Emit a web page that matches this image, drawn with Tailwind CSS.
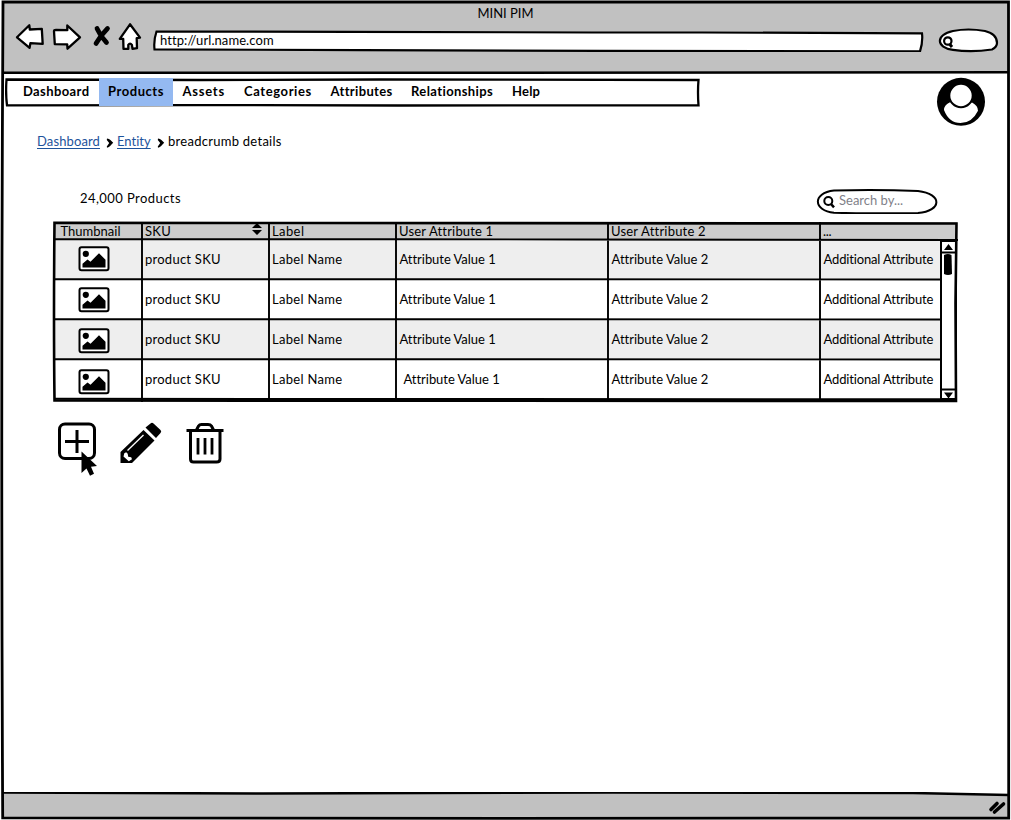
<!DOCTYPE html>
<html lang="en"><head><meta charset="utf-8"><title>MINI PIM</title>
<script src="https://cdn.jsdelivr.net/npm/@tailwindcss/browser@4"></script></head>
<body class="bg-white">
<svg class="hidden">
<symbol id="pic" viewBox="0 0 32 26"><rect x="1.500" y="1.200" width="29" height="23" rx="2" fill="#fff" stroke="#000" stroke-width="2"/><circle cx="7.800" cy="7.800" r="3.100"/><path d="M4.500 21.500v-3.800l5-4.200 3 2.200 8.500-8.500 6.500 6.500v7.800z"/></symbol>
<symbol id="chev" viewBox="0 0 8 10"><path d="M1 .5C4 1 5 2.500 7.200 4.800 5 7 4 9 1 9.700L.8 8.500 3.200 5 .8 2z"/></symbol>
</svg>
<div class="relative flex h-[820px] w-[1011px] flex-col overflow-hidden font-['Lato','Liberation_Sans',sans-serif] text-[13px] leading-4 text-black [font-variant-ligatures:none]">
<header class="flex h-[73px] shrink-0 flex-col bg-[#c1c1c1]">
<div class="flex h-[22px] items-center justify-center pt-[3px]"><span>MINI PIM</span></div>
<div class="flex h-[40px] items-start">
<svg class="h-[40px] w-[152px] shrink-0" viewBox="0 22 152 40" fill="#fff" stroke="#000" stroke-width="2.300" stroke-linejoin="round">
<path d="M17 37.300 29.300 25.300l.5 4.200 12-.6.9 15-12.300-.8-.8 4.700z"/><path d="M54 31.300q0-1.300 2-1.300l11.300.2V25.500L80 37.300 67.500 48.700l-.3-4.400-12.400-.1z"/>
<path d="M97 28.500q3.500 8 9.500 14M107.500 28.500q-7 7-11.500 15" stroke-width="4.700" stroke-linecap="round"/>
<path d="m130 24.300 10 13.300-3.300.6.300 10-4.500.7-.6-4q-1.900-2.600-3.600 0v4h-4.800l-.3-10h-3.400z"/></svg>
<div class="relative h-[22px] w-[772px] shrink-0 pt-[10px] pl-[8px]"><svg class="absolute top-[8px] left-0" width="772" height="22" viewBox="152 30 772 22"><path d="M156.500 31.500 350 31.800 592 32.500h110l220 .8q1 9-2 18L600 50.800 360 50.200l-205.500-.9q-1-9 2-17.800z" fill="#fff" stroke="#000" stroke-width="2.200"/></svg><span class="relative tracking-[.08px]">http://url.name.com</span></div>
<svg class="mt-[5px] ml-[13px] h-[28px] w-[64px] shrink-0" viewBox="937 27 64 28" fill="#fff" stroke="#000" stroke-width="2.200"><path d="M953 31q15-3 32 0 12 3 12 12 0 4-5 6.500-21 3-39 .3c-17-2-18-15 0-18.800z"/><circle cx="947.800" cy="41" r="3.700"/><path d="m949.500 44 2.500 3" stroke-width="3"/></svg>
</div>
</header>

<div class="flex h-[55px] shrink-0 pl-[5px]">
<div class="relative mt-[5px] h-[29px] w-[695px]">
<svg class="absolute inset-0" width="695" height="29" viewBox="5 78 695 29" fill="none" stroke="#000"><path d="M6.500 79.500 200 80l180-.5 318.500.5q-1 12 0 25.300l-300.500.2-200-.4-191 .3q-1.500-12-.5-25.900z" stroke-width="2.300"/></svg>
<nav class="relative flex h-[28px] pl-[9px] font-bold leading-[27px] whitespace-nowrap"><a class="w-[85px] pl-[9px] tracking-[0.4px]">Dashboard</a><a class="w-[74px] bg-[#94b9f1] pl-[9px] tracking-[0.55px]">Products</a><a class="w-[62px] pl-[9.500px] tracking-[0.75px]">Assets</a><a class="w-[87px] pl-[9px] tracking-[0.6px]">Categories</a><a class="w-[80px] pl-[8.500px] tracking-[0.35px]">Attributes</a><a class="w-[101px] pl-[9px] tracking-[0.4px]">Relationships</a><a class="pl-[9px] tracking-[0.2px]">Help</a></nav></div>
<svg class="mt-[4px] ml-[236px]" width="50" height="50" viewBox="936 77 50 50"><circle cx="961" cy="101.800" r="24"/><path d="M944 110q0-5 5.500-7.500 2-.5 3.500.5a12 12 0 0 0 16 0q1.500-1 3.500-.3 5.500 3 5.500 8-6 12.300-17.500 12.300T944 110z" fill="#fff"/><circle cx="961" cy="95.500" r="11.700" fill="#fff" stroke="#000" stroke-width="2"/></svg>
</div>
<div class="flex h-[26px] shrink-0 items-center pl-[37px] whitespace-nowrap"><a class="w-[63px] text-[#1d539b] underline underline-offset-2 tracking-[.12px]">Dashboard</a><svg class="ml-[6px] mr-[3px] mt-[3px] h-[10px] w-[8px]"><use href="#chev"/></svg><a class="w-[34px] text-[#1d539b] underline underline-offset-2">Entity</a><svg class="ml-[6px] mr-[3px] mt-[3px] h-[10px] w-[8px]"><use href="#chev"/></svg><span class="tracking-[.27px]">breadcrumb details</span></div>
<div class="mt-[34px] flex h-[34px] shrink-0"><span class="mt-[2px] ml-[80px] w-[736px] tracking-[.43px]">24,000 Products</span>
<div class="relative h-[26px] w-[122px]"><svg class="absolute inset-0" width="122" height="26" viewBox="816 188 122 26" fill="#fff" stroke="#000" stroke-width="2"><path d="M834 190.500q45-1 84 .5c25 3 24 20 0 22q-45 .8-84-.2c-21-2-22-20 0-22.300z"/><circle cx="828.300" cy="201" r="4"/><path d="m831 204 3 3.300" stroke-width="2.500"/></svg><span class="relative ml-[23px] block pt-[4px] text-[#818189]">Search by...</span></div></div>

<div class="relative ml-[54px] h-[181px] w-[904px] shrink-0">
<div class="grid grid-cols-[88px_127px_127px_212px_212px_137px] whitespace-nowrap">
<div class="col-span-6 grid h-[18px] grid-cols-subgrid bg-[#ccc] leading-[19px]"><span class="pl-[6.500px]">Thumbnail</span><span class="flex justify-between pr-[7px] pl-[3px] tracking-[.3px]">SKU<svg width="10" height="12" viewBox="0 0 10 12" class="mt-[1px]"><path d="m5 0 5 5H0zM0 7h10L5 12z"/></svg></span><span class="pl-[3px] tracking-[.4px]">Label</span><span class="pl-[3px] tracking-[.17px]">User Attribute 1</span><span class="pl-[3px] tracking-[.2px]">User Attribute 2</span><span class="pl-[3px] tracking-[-.3px]">...</span></div>
<div class="col-span-6 grid h-10 grid-cols-subgrid bg-[#eee] leading-[39px]"><span class="pt-[6px] pl-[24px]"><svg class="h-[26px] w-[32px]"><use href="#pic"/></svg></span><span class="pl-[3px] tracking-[.25px]">product SKU</span><span class="pl-[3px] tracking-[.3px]">Label Name</span><span class="pl-[3.500px] tracking-[-.04px]">Attribute Value 1</span><span class="pl-[3.500px]">Attribute Value 2</span><span class="pl-[3.500px] tracking-[-.15px]">Additional Attribute</span></div>
<div class="col-span-6 grid h-10 grid-cols-subgrid leading-[39px]"><span class="pt-[7px] pl-[24px]"><svg class="h-[26px] w-[32px]"><use href="#pic"/></svg></span><span class="pl-[3px] tracking-[.25px]">product SKU</span><span class="pl-[3px] tracking-[.3px]">Label Name</span><span class="pl-[3.500px] tracking-[-.04px]">Attribute Value 1</span><span class="pl-[3.500px]">Attribute Value 2</span><span class="pl-[3.500px] tracking-[-.15px]">Additional Attribute</span></div>
<div class="col-span-6 grid h-10 grid-cols-subgrid bg-[#eee] leading-[39px]"><span class="pt-[8px] pl-[24px]"><svg class="h-[26px] w-[32px]"><use href="#pic"/></svg></span><span class="pl-[3px] tracking-[.25px]">product SKU</span><span class="pl-[3px] tracking-[.3px]">Label Name</span><span class="pl-[3.500px] tracking-[-.04px]">Attribute Value 1</span><span class="pl-[3.500px]">Attribute Value 2</span><span class="pl-[3.500px] tracking-[-.15px]">Additional Attribute</span></div>
<div class="col-span-6 grid h-10 grid-cols-subgrid leading-[39px]"><span class="pt-[9px] pl-[24px]"><svg class="h-[26px] w-[32px]"><use href="#pic"/></svg></span><span class="pl-[3px] tracking-[.25px]">product SKU</span><span class="pl-[3px] tracking-[.3px]">Label Name</span><span class="pl-[7.500px] tracking-[-.04px]">Attribute Value 1</span><span class="pl-[3.500px]">Attribute Value 2</span><span class="pl-[3.500px] tracking-[-.15px]">Additional Attribute</span></div>
</div>
<svg class="absolute inset-0 overflow-visible" width="904" height="181" viewBox="54 222 904 181" fill="none" stroke="#000" stroke-width="2"><path d="M941 241h15v158h-15z" fill="#fff"/><path d="m54.500 222.800 250 .2 652 .5-1 80 .5 97.500-901.500-.5q-1-80 0-177.700z" stroke-width="2.600"/><path d="M54 239.200h354l170 .3 380 .5M54 279.200h484l402 .3M54 319.200h484l402 .3M54 359.200h484l402 .3M142 222v180M269 222v180M396 222v180M608 222v180M820 222v180M941 240v160" stroke-width="1.900"/><path d="M54 398.800 957 399.300M941 252.500h15M941 389.500h15"/><path d="m944 250 4.500-6 4.500 6zM944 392.500h9l-4.500 6z" fill="#000" stroke="none"/><path d="M944 255q4-2 7.500 0l.5 19q-4 2-8 0z" fill="#000" stroke="none"/></svg>
</div>
<div class="ml-[56px] flex h-[56px] shrink-0 pt-[18px]">
<svg width="170" height="58" viewBox="56 421 170 58" class="shrink-0 overflow-visible"><rect x="59.500" y="424" width="35" height="34.500" rx="5.500" fill="none" stroke="#000" stroke-width="3"/><path d="M65 441.500h24M77 430v23" stroke="#000" stroke-width="3"/><path d="M81.500 451.500 97 466l-6 .8 3 7-4 2-3.500-7.300-5 4.500z"/>
<path d="m145.500 427.500 5-4q1.500-1.300 3 0l7 6.500q1.500 1.500 0 3l-4.500 5zM143.500 430l11 10.500-22.500 22.500H120.500V452z"/><path d="m124.300 453.300 1.900-1 1.500 1.500.5 3 3 .5.800 2-3.200 2-5.300-4.800z" fill="#fff"/><path d="m127.500 450.500 16-15.500" stroke="#fff" stroke-width="1.300"/>
<g fill="none" stroke="#000" stroke-width="3"><path d="M186.500 430.500h37" stroke-width="2.800"/><path d="M190.500 431v28q0 3 3 3h23q3.500 0 3.500-3v-28M196.500 430l2-4q1-1.500 3-1.500h6.500q2.500 0 3.500 1.500l2 4"/><path d="M198 438v16.500M205 438v16.500M212 438v16.500" stroke-width="2.800"/></g></svg></div>
<div class="grow"></div>
<svg class="h-[28px] w-full shrink-0" viewBox="0 792 1011 28"><path d="M3 792.500 250 793l480-.7 280 2V819H3z" fill="#c1c1c1"/><path d="m3 792.500 60 .3 200 .7 350-1 300 .5 96 2" fill="none" stroke="#000" stroke-width="2.500"/><path d="m991 809.500 6-6M994.500 812l9-8" stroke="#000" stroke-width="3.600" stroke-linecap="round"/></svg>
<svg class="pointer-events-none absolute inset-0" width="1011" height="820" fill="none" stroke="#000"><path d="M0 0h1011v1H0zM0 0h2v820H0zM1009 0h2v820h-2z" fill="#fff" stroke="none"/><path d="M3 2h1005.500q-.5 400 .2 816l-500.500.4-505.500-.6q-2-400 .3-815.800z" stroke-width="2.800"/><path d="M2 72.700h500l507-.4" stroke-width="2.600"/></svg>
</div></body></html>
